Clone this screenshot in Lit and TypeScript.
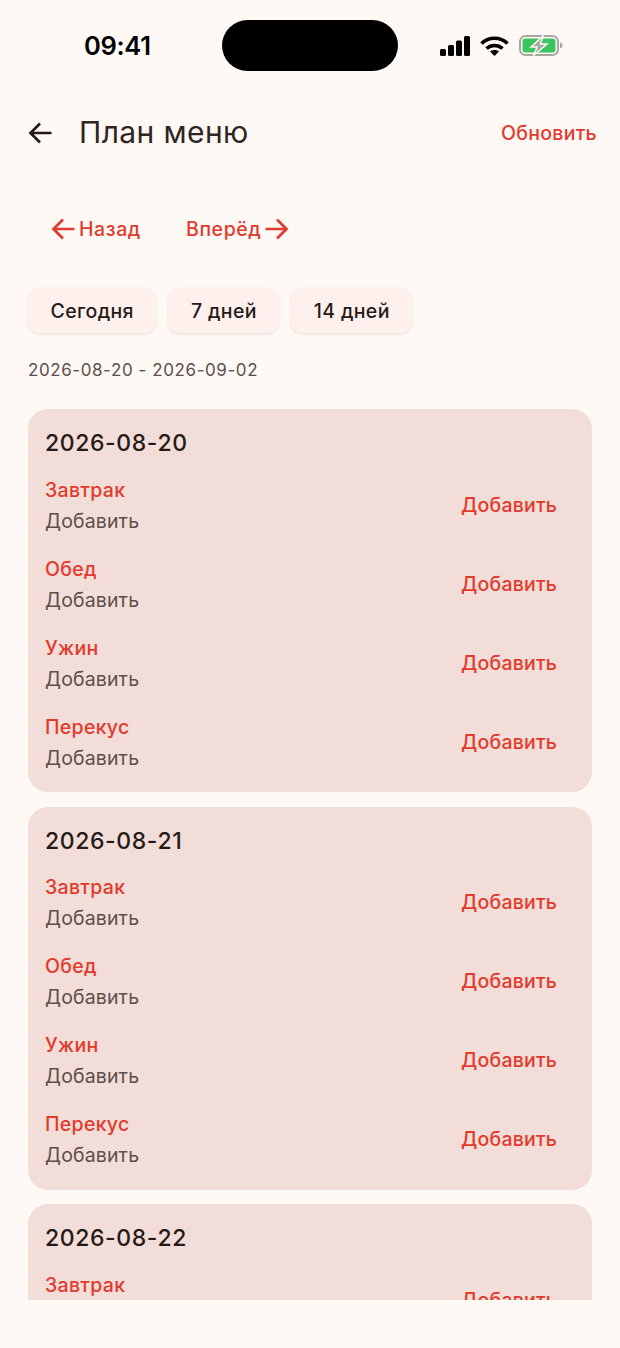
import { LitElement, html, css, svg } from "lit";
import { customElement } from "lit/decorators.js";

const MEALS = ["Завтрак", "Обед", "Ужин", "Перекус"];
const DAYS = ["2026-08-20", "2026-08-21", "2026-08-22"];

@customElement("app-root")
export class AppRoot extends LitElement {
  static styles = css`
    :host { display: block; width: 620px; height: 1348px; background: #fff9f6; font-family: Inter, "Noto Sans", sans-serif; color: #261a18; overflow: hidden; }
    .status { height: 91px; display: flex; align-items: flex-start; position: relative; }
    .time { position: absolute; left: 84px; top: 30px; font: 600 25.5px/32px Inter, sans-serif; color: #000; letter-spacing: -0.3px; }
    .island { position: absolute; left: 222px; top: 20px; width: 176px; height: 51px; border-radius: 26px; background: #000; }
    .sys { position: absolute; left: 440px; top: 35px; display: flex; align-items: center; gap: 10px; }
    .appbar { height: 84px; display: flex; align-items: center; padding: 0 23px 0 28px; }
    .appbar svg { display: block; }
    .title { margin-left: 27px; font-size: 30px; font-weight: 400; letter-spacing: 0.4px; flex: 1; margin-top: -2px; color: #2f2523; }
    .refresh { font-size: 19.5px; font-weight: 500; color: #e23a2c; letter-spacing: 0.3px; }
    .nav { margin-top: 32px; height: 44px; display: flex; align-items: center; padding-left: 51px; gap: 45px; color: #e23a2c; font-size: 19.5px; font-weight: 500; letter-spacing: 0.6px; }
    .nav span { display: flex; align-items: center; gap: 4px; }
    .chips { margin-top: 37px; display: flex; gap: 12px; padding-left: 28px; }
    .chip { height: 45px; box-sizing: border-box; padding: 0 22.5px; display: flex; align-items: center; background: #fef0ec; border-radius: 11px; font-size: 19.5px; font-weight: 500; letter-spacing: 0.35px; box-shadow: 0 1px 3px rgba(90, 40, 30, 0.14); }
    .range { margin-top: 25px; padding-left: 28px; font-size: 17px; line-height: 24px; color: #5c4f4c; letter-spacing: 0.58px; }
    .list { margin-top: 27px; height: 891px; overflow: hidden; display: flex; flex-direction: column; gap: 14.5px; padding: 0 28px; }
    .card { flex: none; background: #f2ddd8; border-radius: 20px; padding: 17px 35px 11px 17px; height: 383px; box-sizing: border-box; }
    .date { font-size: 23px; line-height: 34px; font-weight: 500; letter-spacing: 0.6px; color: #261a18; margin-bottom: 6px; }
    .row { height: 79px; display: flex; align-items: center; justify-content: space-between; }
    .meal { font-size: 19.5px; line-height: 31px; font-weight: 500; letter-spacing: 0.3px; color: #e23a2c; }
    .add { font-size: 19.5px; line-height: 31px; letter-spacing: 0.15px; color: #5c4f4c; }
    .btn { font-size: 19.5px; font-weight: 500; letter-spacing: 0.2px; color: #e23a2c; margin-top: -2px; }
  `;

  private arrow(dir: "left" | "right", color: string, size: number) {
    const d = dir === "left" ? "M23.500 12H2M12 2.500L2.500 12l9.500 9.500" : "M.5 12h21.500M12 2.500L21.500 12 12 21.500";
    return html`<svg width=${size} height=${size} viewBox="0 0 24 24" fill="none" stroke=${color} stroke-width="2.700">${svg`<path d=${d}/>`}</svg>`;
  }

  render() {
    return html`
      <div class="status">
        <div class="time">09:41</div>
        <div class="island"></div>
        <div class="sys">
          <svg width="30" height="20" viewBox="0 0 30 20" fill="#000"><rect x="0" y="13" width="6" height="7" rx="1.5"/><rect x="8" y="9" width="6" height="11" rx="1.5"/><rect x="16" y="4.500" width="6" height="15.500" rx="1.5"/><rect x="24" y="0" width="6" height="20" rx="1.5"/></svg>
          <svg width="29" height="20" viewBox="0 0 29 20" fill="none" stroke="#000" stroke-width="3.600"><path d="M1.500 7.500C8.500 .5 20.500 .5 27.500 7.500"/><path d="M6.500 12.500c4.500-4 11.500-4 16 0"/><path d="M14.500 20l-4.500-4.500c2.500-2 6.500-2 9 0z" fill="#000" stroke="none"/></svg>
          <svg width="44" height="21" viewBox="0 0 44 21"><rect x="1" y="1" width="38" height="19" rx="5.500" fill="none" stroke="#a9a6a2" stroke-width="2"/><rect x="3.500" y="3.500" width="33" height="14" rx="3" fill="#3cc45f"/><path d="M41 7.500c1.600.4 2.500 1.500 2.500 3s-.9 2.600-2.500 3z" fill="#a9a6a2"/><path d="M24 1L12 12h6l-3 8L28 9h-6.500z" fill="#a9a6a2" stroke="#fff9f6" stroke-width="1.500"/></svg>
        </div>
      </div>
      <div class="appbar">
        ${this.arrow("left", "#261a18", 24)}
        <div class="title">План меню</div>
        <div class="refresh">Обновить</div>
      </div>
      <div class="nav">
        <span>${this.arrow("left", "#e23a2c", 24)}Назад</span>
        <span>Вперёд${this.arrow("right", "#e23a2c", 24)}</span>
      </div>
      <div class="chips">
        <div class="chip">Сегодня</div>
        <div class="chip">7 дней</div>
        <div class="chip">14 дней</div>
      </div>
      <div class="range">2026-08-20 - 2026-09-02</div>
      <div class="list">
        ${DAYS.map(
          (d) => html`<div class="card">
            <div class="date">${d}</div>
            ${MEALS.map(
              (m) => html`<div class="row">
                <div><div class="meal">${m}</div><div class="add">Добавить</div></div>
                <div class="btn">Добавить</div>
              </div>`
            )}
          </div>`
        )}
      </div>
    `;
  }
}
